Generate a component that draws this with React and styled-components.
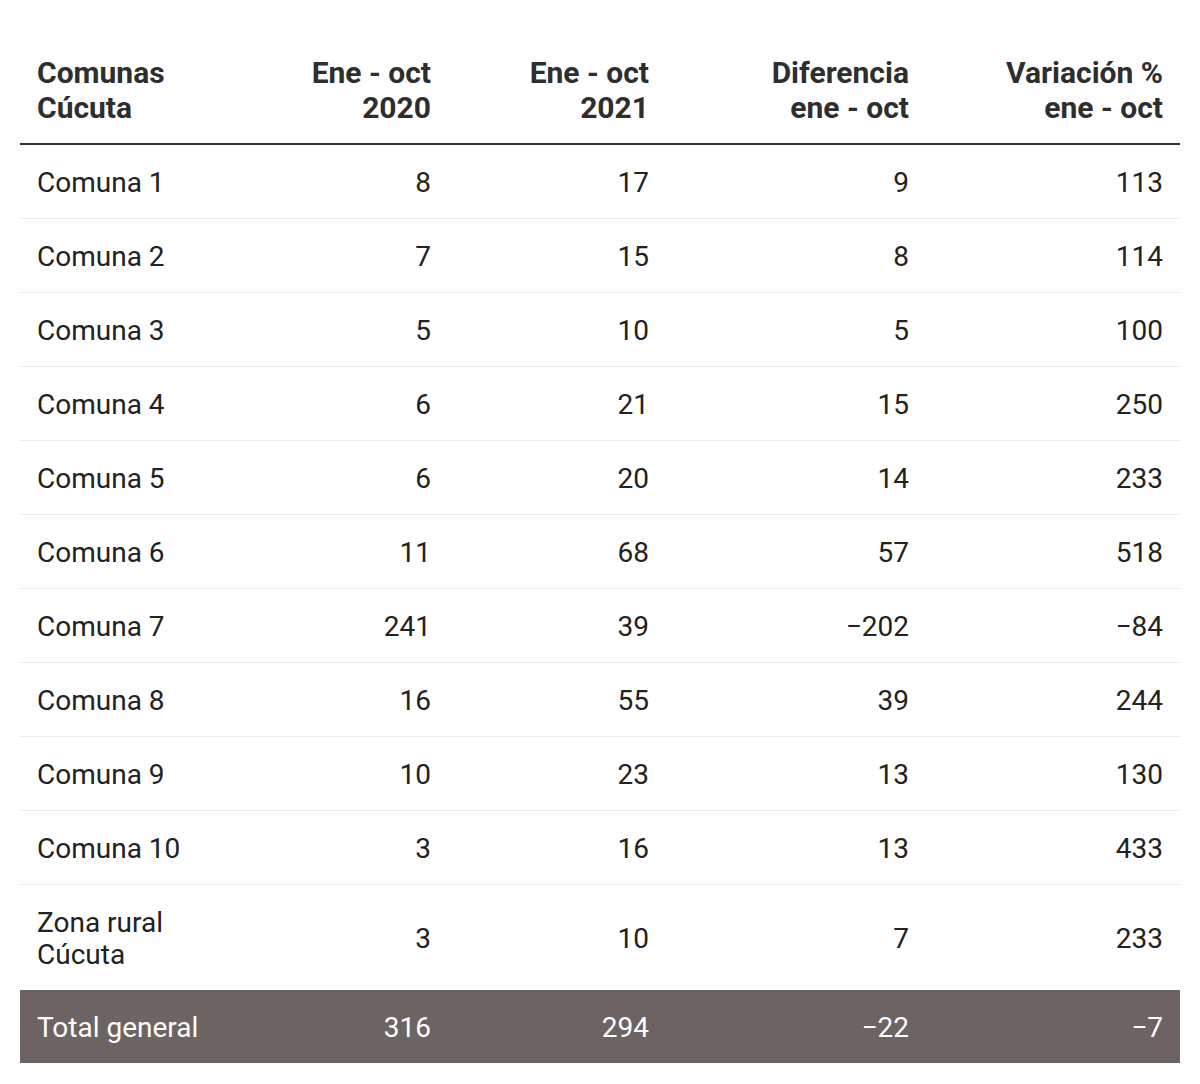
import React from "react";
import styled, { createGlobalStyle } from "styled-components";

const GlobalStyle = createGlobalStyle`
  body {
    margin: 0;
    background: #ffffff;
    font-family: Roboto, "Liberation Sans", sans-serif;
  }
`;

const Page = styled.div`
  padding: 20px;
`;

const Table = styled.table`
  width: 1160px;
  border-collapse: collapse;
  table-layout: fixed;
  color: #222222;
`;

const HeadCell = styled.th`
  padding: 35px 17px 18px;
  font-size: 30px;
  line-height: 35px;
  font-weight: 700;
  color: #2e2e2e;
  text-align: ${props => (props.left ? "left" : "right")};
  vertical-align: bottom;
  border-bottom: 2px solid #333333;
`;

const Row = styled.tr`
  background: ${props => (props.total ? "#6c6462" : "transparent")};
  color: ${props => (props.total ? "#ffffff" : "#222222")};
  border-bottom: ${props => (props.last || props.total ? "none" : "1px solid #ececec")};
`;

const Cell = styled.td`
  padding: ${props => (props.total ? "22px 17px 19px" : "21.5px 17px 19.5px")};
  font-size: 28px;
  line-height: 32px;
  text-align: ${props => (props.left ? "left" : "right")};
  vertical-align: middle;
`;

const columns = [
  { label: ["Comunas", "Cúcuta"], width: 220, left: true },
  { label: ["Ene - oct", "2020"], width: 208 },
  { label: ["Ene - oct", "2021"], width: 218 },
  { label: ["Diferencia", "ene - oct"], width: 260 },
  { label: ["Variación %", "ene - oct"], width: 254 },
];

const rows = [
  [["Comuna 1"], 8, 17, 9, 113],
  [["Comuna 2"], 7, 15, 8, 114],
  [["Comuna 3"], 5, 10, 5, 100],
  [["Comuna 4"], 6, 21, 15, 250],
  [["Comuna 5"], 6, 20, 14, 233],
  [["Comuna 6"], 11, 68, 57, 518],
  [["Comuna 7"], 241, 39, -202, -84],
  [["Comuna 8"], 16, 55, 39, 244],
  [["Comuna 9"], 10, 23, 13, 130],
  [["Comuna 10"], 3, 16, 13, 433],
  [["Zona rural", "Cúcuta"], 3, 10, 7, 233],
];

const total = [["Total general"], 316, 294, -22, -7];

const fmt = n => (n < 0 ? `\u2212${Math.abs(n)}` : `${n}`);

const Lines = ({ parts }) =>
  parts.map((p, i) => (
    <React.Fragment key={i}>
      {i > 0 && <br />}
      {p}
    </React.Fragment>
  ));

const DataRow = ({ data, last, isTotal }) => (
  <Row last={last} total={isTotal}>
    <Cell left total={isTotal}>
      <Lines parts={data[0]} />
    </Cell>
    {data.slice(1).map((v, i) => (
      <Cell key={i} total={isTotal}>
        {fmt(v)}
      </Cell>
    ))}
  </Row>
);

export default function App() {
  return (
    <Page>
      <GlobalStyle />
      <Table>
        <colgroup>
          {columns.map((c, i) => (
            <col key={i} style={{ width: c.width }} />
          ))}
        </colgroup>
        <thead>
          <tr>
            {columns.map((c, i) => (
              <HeadCell key={i} left={c.left}>
                <Lines parts={c.label} />
              </HeadCell>
            ))}
          </tr>
        </thead>
        <tbody>
          {rows.map((r, i) => (
            <DataRow key={i} data={r} last={i === rows.length - 1} />
          ))}
          <DataRow data={total} isTotal />
        </tbody>
      </Table>
    </Page>
  );
}
